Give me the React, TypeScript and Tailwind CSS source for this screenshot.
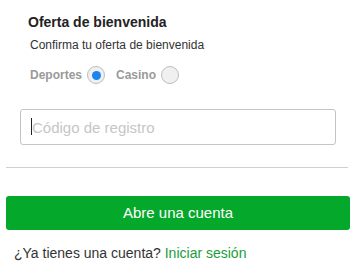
import React from "react";

function Radio({ checked }: { checked?: boolean }) {
  return (
    <span className="ml-[5px] flex h-[18px] w-[18px] items-center justify-center rounded-full border border-[#bdbdbd] bg-[#f0f0f0]">
      {checked && <span className="h-[9px] w-[9px] rounded-full bg-[#1a84f0]" />}
    </span>
  );
}

export default function App() {
  return (
    <div
      className="w-[354px] h-[272px] bg-white text-[#333]"
      style={{ fontFamily: '"Liberation Sans", Arial, sans-serif' }}
    >
      <div className="pt-[14px] pl-[28px] text-[14px] leading-[16px] font-bold text-[#222]">
        Oferta de bienvenida
      </div>
      <div className="mt-[7px] pl-[30px] text-[12px] leading-[16px] text-[#333]">
        Confirma tu oferta de bienvenida
      </div>
      <div className="mt-[13px] flex h-[18px] items-center pl-[30px]">
        <label className="flex items-center">
          <span className="text-[12px] leading-[16px] font-bold text-[#9a9a9a]">Deportes</span>
          <Radio checked />
        </label>
        <label className="ml-[11px] flex items-center">
          <span className="text-[12px] leading-[16px] font-bold text-[#9a9a9a]">Casino</span>
          <Radio />
        </label>
      </div>
      <div className="relative mt-[25px] ml-[20px] w-[316px]">
        <input
          className="block h-[36px] w-full rounded-[3px] border border-[#c4c4c4] bg-white pl-[11px] text-[15px] text-[#333] outline-none caret-transparent placeholder:text-[#c6c6c6]"
          placeholder="Código de registro"
        />
        <span className="absolute left-[11px] top-[9px] h-[17px] w-px bg-[#222]" />
      </div>
      <div className="mt-[22px] mx-[6px] h-px bg-[#d0d0d0]" />
      <button className="mt-[28px] ml-[6px] flex h-[34px] w-[344px] items-center justify-center rounded-[3px] bg-[#04a82a] text-[15px] text-white">
        Abre una cuenta
      </button>
      <div className="mt-[13px] pl-[14px] text-[14px] leading-[20px] text-[#333]">
        ¿Ya tienes una cuenta? <span className="text-[#1a9d3c]">Iniciar sesión</span>
      </div>
    </div>
  );
}
